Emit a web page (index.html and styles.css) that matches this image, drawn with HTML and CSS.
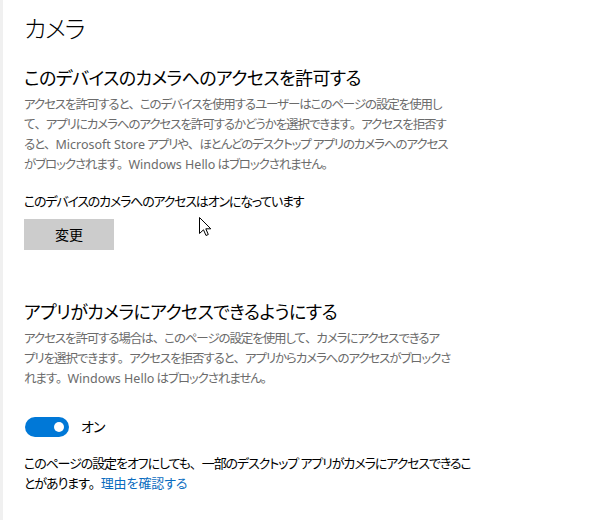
FILE: index.html
```html
<!DOCTYPE html>
<html lang="ja">
<head>
  <meta charset="UTF-8" />
  <title>カメラ</title>
  <meta name="viewport" content="width=device-width, initial-scale=1.0" />
  <link rel="stylesheet" href="styles.css">
</head>
<body>

<div class="page">
  <h1 class="title">カメラ</h1>

  <section class="group" id="device-access">
    <h2>このデバイスのカメラへのアクセスを許可する</h2>
    <p class="desc">
      アクセスを許可すると<i>、</i>このデバイスを使用するユーザーはこのページの設定を使用し<br>
      て<i>、</i>アプリにカメラへのアクセスを許可するかどうかを選択できます<i>。</i>アクセスを拒否す<br>
      ると<i>、</i><span class="en">Microsoft Store</span> アプリや<i>、</i>ほとんどのデスクトップ アプリのカメラへのアクセス<br>
      がブロックされます<i>。</i><span class="en">Windows Hello</span> はブロックされません<i>。</i>
    </p>
    <p class="status">このデバイスのカメラへのアクセスはオンになっています</p>
    <button class="btn">変更</button>
  </section>

  <section class="group" id="app-access">
    <h2>アプリがカメラにアクセスできるようにする</h2>
    <p class="desc">
      アクセスを許可する場合は<i>、</i>このページの設定を使用して<i>、</i>カメラにアクセスできるア<br>
      プリを選択できます<i>。</i>アクセスを拒否すると<i>、</i>アプリからカメラへのアクセスがブロックさ<br>
      れます<i>。</i><span class="en">Windows Hello</span> はブロックされません<i>。</i>
    </p>
    <div class="toggle-row">
      <span class="toggle on"><span class="knob"></span></span>
      <span class="toggle-label">オン</span>
    </div>
    <p class="note">
      このページの設定をオフにしても<i>、</i>一部のデスクトップ アプリがカメラにアクセスできるこ<br>
      とがあります<i>。</i><a href="#">理由を確認する</a>
    </p>
  </section>

  <svg class="cursor" width="13" height="20" viewBox="0 0 13 20">
    <path d="M0.5 0.5 L0.5 16.5 L4.5 12.8 L7 18.5 L9.3 17.5 L6.8 11.8 L11.8 11.8 Z" fill="#fff" stroke="#000" stroke-width="1" stroke-linejoin="miter"/>
  </svg>
</div>

</body>
</html>
```

FILE: styles.css
```css
html, body {
  margin: 0;
  background: #fff;
}
body {
  font-family: "Noto Sans", "Noto Sans CJK JP", sans-serif;
  font-feature-settings: "palt";
  font-size: 13px;
  line-height: 20px;
  letter-spacing: -0.8px;
  color: #000;
}
/* full-width punctuation, not squeezed by palt */
.desc i, .note i {
  font-style: normal;
  font-feature-settings: normal;
}
.en {
  letter-spacing: 0;
}
.page {
  position: relative;
  min-height: 520px;
  box-sizing: border-box;
  border-left: 3px solid #f0f0f0;
  padding: 11px 0 0 21px;
}
.title {
  margin: 0;
  font-size: 24px;
  line-height: 36px;
  font-weight: 300;
  letter-spacing: -1.2px;
}
.group h2 {
  margin: 0 0 3px;
  font-size: 18px;
  line-height: 28px;
  font-weight: 400;
  letter-spacing: -0.6px;
}
#device-access { margin-top: 17px; }
#app-access { margin-top: 48px; }
.desc {
  margin: 0;
  font-size: 12.5px;
  letter-spacing: -1.1px;
  color: #6b6b6b;
}
.status {
  margin: 16px 0 0;
  letter-spacing: -1.2px;
}
.btn {
  display: block;
  margin-top: 8px;
  width: 90px;
  height: 31px;
  padding: 0;
  border: none;
  background: #cccccc;
  font: inherit;
  font-size: 14px;
  color: #000;
}
.toggle-row {
  display: flex;
  align-items: center;
  gap: 12px;
  margin-top: 28px;
  padding-left: 1px;
}
.toggle {
  position: relative;
  width: 44px;
  height: 20px;
  border-radius: 10px;
  background: #0078d7;
}
.knob {
  position: absolute;
  top: 5px;
  right: 5px;
  width: 10px;
  height: 10px;
  border-radius: 50%;
  background: #fff;
}
.toggle-label {
  font-size: 14px;
}
.note {
  margin: 16px 0 0;
  letter-spacing: -1.1px;
}
.note a {
  color: #0a6cc0;
  text-decoration: none;
  letter-spacing: -0.1px;
}
.cursor {
  position: absolute;
  left: 196px;
  top: 217px;
}
```
